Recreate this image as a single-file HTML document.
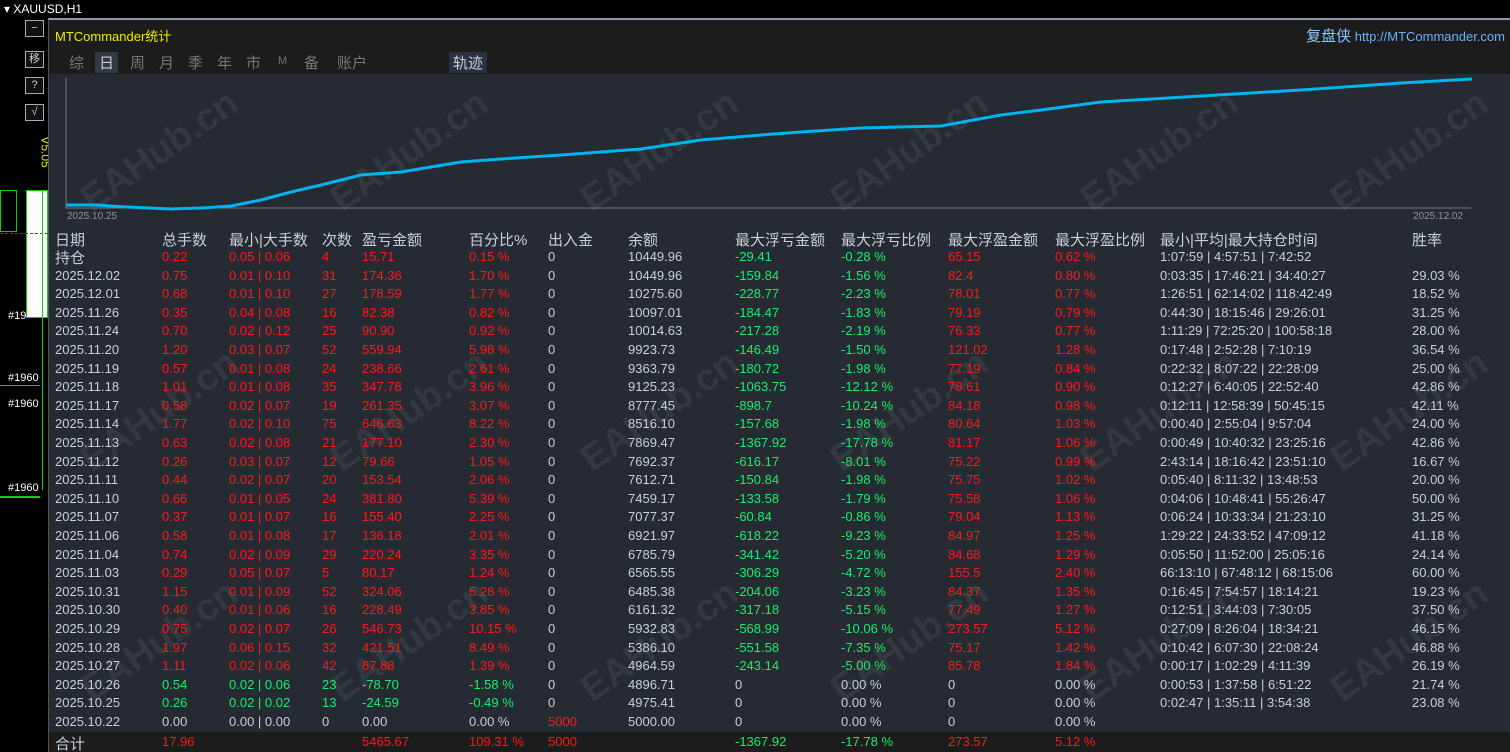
<!DOCTYPE html>
<html><head><meta charset="utf-8"><style>
body{margin:0;width:1510px;height:750px;background:#000;overflow:hidden;position:relative;font-family:"Liberation Sans","Noto Sans CJK SC",sans-serif;font-size:13px;color:#c8d0dc}
.abs{position:absolute}
#panel{left:48px;top:18px;width:1462px;height:732px;background:#252a33;border-top:2px solid #8a98aa;border-left:1px solid #555;overflow:hidden}
#hdr{left:0;top:0;width:1462px;height:54px;background:#1c1c1c}
.tab{position:absolute;top:32px;font-size:15px;color:#777;white-space:nowrap}
.btn{position:absolute;left:25px;width:17px;height:15px;border:1px solid #aab;background:#111;color:#ccc;font-size:11px;text-align:center;line-height:15px}
.r{color:#ff1a1a}.g{color:#1aee6a}.w{color:#c8d0dc}
.row{position:absolute;left:0;width:1460px;height:18px;white-space:nowrap}
.row span{position:absolute;top:0;white-space:nowrap}
.wm{position:absolute;font-size:38px;font-weight:bold;color:rgba(255,255,255,0.07);transform:rotate(-35deg);white-space:nowrap}
</style></head><body>
<div class="abs" style="left:4px;top:2px;color:#fff;font-size:12px">▾ XAUUSD,H1</div>
<div class="btn" style="top:20px">−</div>
<div class="btn" style="top:51px">移</div>
<div class="btn" style="top:77px">?</div>
<div class="btn" style="top:104px">√</div>
<div class="abs" style="left:30px;top:145px;color:#ee0;font-size:12px;transform:rotate(90deg)">V5.05</div>
<div class="abs" style="left:0;top:190px;width:15px;height:40px;border:1px solid #1c1"></div>
<div class="abs" style="left:26px;top:190px;width:20px;height:126px;background:#fff;border:1px solid #1c1"></div>
<div class="abs" style="left:0;top:233px;width:48px;border-top:1px dashed #f00"></div>
<div class="abs" style="left:42px;top:190px;width:1px;height:300px;background:#1c1"></div>
<div class="abs" style="left:8px;top:310px;color:#fff;font-size:11px">#19</div>
<div class="abs" style="left:8px;top:372px;color:#fff;font-size:11px">#1960</div>
<div class="abs" style="left:8px;top:398px;color:#fff;font-size:11px">#1960</div>
<div class="abs" style="left:8px;top:482px;color:#fff;font-size:11px">#1960</div>
<div class="abs" style="left:0;top:385px;width:40px;border-top:1px solid #1c1"></div>
<div class="abs" style="left:0;top:496px;width:40px;border-top:2px solid #1c1"></div>
<div id="panel" class="abs">
<div id="hdr" class="abs">
<div class="abs" style="left:6px;top:6px;color:#ee0;font-size:13px;white-space:nowrap">MTCommander统计</div>
<div class="abs" style="right:6px;top:5px;font-size:13px;white-space:nowrap"><span style="color:#8cc8ff;font-size:15px">复盘侠</span> <span style="color:#6ab0ff">http://MTCommander.com</span></div>
<span class="tab" style="left:20px">综</span>
<span class="tab" style="left:46px;background:#333a44;color:#ccd;padding:0 4px">日</span>
<span class="tab" style="left:81px">周</span>
<span class="tab" style="left:110px">月</span>
<span class="tab" style="left:139px">季</span>
<span class="tab" style="left:168px">年</span>
<span class="tab" style="left:197px">市</span>
<span class="tab" style="left:229px;font-size:11px;top:35px">M</span>
<span class="tab" style="left:255px">备</span>
<span class="tab" style="left:288px">账户</span>
<span class="tab" style="left:400px;background:#2a3240;color:#ccd;padding:0 4px">轨迹</span>
</div>
<div class="wm" style="left:20px;top:110px">EAHub.cn</div>
<div class="wm" style="left:270px;top:110px">EAHub.cn</div>
<div class="wm" style="left:520px;top:110px">EAHub.cn</div>
<div class="wm" style="left:770px;top:110px">EAHub.cn</div>
<div class="wm" style="left:1020px;top:110px">EAHub.cn</div>
<div class="wm" style="left:1270px;top:110px">EAHub.cn</div>
<div class="wm" style="left:20px;top:370px">EAHub.cn</div>
<div class="wm" style="left:270px;top:370px">EAHub.cn</div>
<div class="wm" style="left:520px;top:370px">EAHub.cn</div>
<div class="wm" style="left:770px;top:370px">EAHub.cn</div>
<div class="wm" style="left:1020px;top:370px">EAHub.cn</div>
<div class="wm" style="left:1270px;top:370px">EAHub.cn</div>
<div class="wm" style="left:20px;top:600px">EAHub.cn</div>
<div class="wm" style="left:270px;top:600px">EAHub.cn</div>
<div class="wm" style="left:520px;top:600px">EAHub.cn</div>
<div class="wm" style="left:770px;top:600px">EAHub.cn</div>
<div class="wm" style="left:1020px;top:600px">EAHub.cn</div>
<div class="wm" style="left:1270px;top:600px">EAHub.cn</div>
<svg class="abs" style="left:0;top:0" width="1462" height="200">
<polyline points="17,58 17,188 1422,188" fill="none" stroke="#777" stroke-width="1"/>
<polyline points="17,185 47,185 77,187 122,189 152,188 182,186 212,180 242,172 272,165 312,155 352,152 412,142 452,139 512,135 592,129 652,120 712,115 752,112 812,108 892,106 952,95 992,90 1052,82 1152,76 1252,70 1352,63 1423,59" fill="none" stroke="#00b4f0" stroke-width="3"/>
</svg>
<div class="abs" style="left:18px;top:191px;font-size:10px;color:#8a94a4">2025.10.25</div>
<div class="abs" style="left:1364px;top:191px;font-size:10px;color:#8a94a4">2025.12.02</div>
<div class="abs" style="left:0;top:712px;width:1462px;height:20px;background:#1c1c1c"></div>
<div id="tbl"></div>
</div>
<script>
const X=[6,113,180,273,313,420,499,579,686,792,899,1006,1111,1363];
const H=["日期","总手数","最小|大手数","次数","盈亏金额","百分比%","出入金","余额","最大浮亏金额","最大浮亏比例","最大浮盈金额","最大浮盈比例","最小|平均|最大持仓时间","胜率"];
const D=`持仓,0.22,0.05|0.06,4,15.71,0.15 %,0,10449.96,-29.41,-0.28 %,65.15,0.62 %,1:07:59|4:57:51|7:42:52,
2025.12.02,0.75,0.01|0.10,31,174.36,1.70 %,0,10449.96,-159.84,-1.56 %,82.4,0.80 %,0:03:35|17:46:21|34:40:27,29.03 %
2025.12.01,0.68,0.01|0.10,27,178.59,1.77 %,0,10275.60,-228.77,-2.23 %,78.01,0.77 %,1:26:51|62:14:02|118:42:49,18.52 %
2025.11.26,0.35,0.04|0.08,16,82.38,0.82 %,0,10097.01,-184.47,-1.83 %,79.19,0.79 %,0:44:30|18:15:46|29:26:01,31.25 %
2025.11.24,0.70,0.02|0.12,25,90.90,0.92 %,0,10014.63,-217.28,-2.19 %,76.33,0.77 %,1:11:29|72:25:20|100:58:18,28.00 %
2025.11.20,1.20,0.03|0.07,52,559.94,5.98 %,0,9923.73,-146.49,-1.50 %,121.02,1.28 %,0:17:48|2:52:28|7:10:19,36.54 %
2025.11.19,0.57,0.01|0.08,24,238.66,2.61 %,0,9363.79,-180.72,-1.98 %,77.19,0.84 %,0:22:32|8:07:22|22:28:09,25.00 %
2025.11.18,1.01,0.01|0.08,35,347.78,3.96 %,0,9125.23,-1063.75,-12.12 %,78.61,0.90 %,0:12:27|6:40:05|22:52:40,42.86 %
2025.11.17,0.58,0.02|0.07,19,261.35,3.07 %,0,8777.45,-898.7,-10.24 %,84.18,0.98 %,0:12:11|12:58:39|50:45:15,42.11 %
2025.11.14,1.77,0.02|0.10,75,646.63,8.22 %,0,8516.10,-157.68,-1.98 %,80.64,1.03 %,0:00:40|2:55:04|9:57:04,24.00 %
2025.11.13,0.63,0.02|0.08,21,177.10,2.30 %,0,7869.47,-1367.92,-17.78 %,81.17,1.06 %,0:00:49|10:40:32|23:25:16,42.86 %
2025.11.12,0.26,0.03|0.07,12,79.66,1.05 %,0,7692.37,-616.17,-8.01 %,75.22,0.99 %,2:43:14|18:16:42|23:51:10,16.67 %
2025.11.11,0.44,0.02|0.07,20,153.54,2.06 %,0,7612.71,-150.84,-1.98 %,75.75,1.02 %,0:05:40|8:11:32|13:48:53,20.00 %
2025.11.10,0.66,0.01|0.05,24,381.80,5.39 %,0,7459.17,-133.58,-1.79 %,75.58,1.06 %,0:04:06|10:48:41|55:26:47,50.00 %
2025.11.07,0.37,0.01|0.07,16,155.40,2.25 %,0,7077.37,-60.84,-0.86 %,79.04,1.13 %,0:06:24|10:33:34|21:23:10,31.25 %
2025.11.06,0.58,0.01|0.08,17,136.18,2.01 %,0,6921.97,-618.22,-9.23 %,84.97,1.25 %,1:29:22|24:33:52|47:09:12,41.18 %
2025.11.04,0.74,0.02|0.09,29,220.24,3.35 %,0,6785.79,-341.42,-5.20 %,84.68,1.29 %,0:05:50|11:52:00|25:05:16,24.14 %
2025.11.03,0.29,0.05|0.07,5,80.17,1.24 %,0,6565.55,-306.29,-4.72 %,155.5,2.40 %,66:13:10|67:48:12|68:15:06,60.00 %
2025.10.31,1.15,0.01|0.09,52,324.06,5.28 %,0,6485.38,-204.06,-3.23 %,84.37,1.35 %,0:16:45|7:54:57|18:14:21,19.23 %
2025.10.30,0.40,0.01|0.06,16,228.49,3.85 %,0,6161.32,-317.18,-5.15 %,77.49,1.27 %,0:12:51|3:44:03|7:30:05,37.50 %
2025.10.29,0.75,0.02|0.07,26,546.73,10.15 %,0,5932.83,-568.99,-10.06 %,273.57,5.12 %,0:27:09|8:26:04|18:34:21,46.15 %
2025.10.28,1.97,0.06|0.15,32,421.51,8.49 %,0,5386.10,-551.58,-7.35 %,75.17,1.42 %,0:10:42|6:07:30|22:08:24,46.88 %
2025.10.27,1.11,0.02|0.06,42,67.88,1.39 %,0,4964.59,-243.14,-5.00 %,85.78,1.84 %,0:00:17|1:02:29|4:11:39,26.19 %
2025.10.26,0.54,0.02|0.06,23,-78.70,-1.58 %,0,4896.71,0,0.00 %,0,0.00 %,0:00:53|1:37:58|6:51:22,21.74 %
2025.10.25,0.26,0.02|0.02,13,-24.59,-0.49 %,0,4975.41,0,0.00 %,0,0.00 %,0:02:47|1:35:11|3:54:38,23.08 %
2025.10.22,0.00,0.00|0.00,0,0.00,0.00 %,5000,5000.00,0,0.00 %,0,0.00 %,,`.split("\n");
let h='<div class="row" style="top:209px;font-size:15px">'+H.map((t,i)=>`<span style="left:${X[i]}px">${t}</span>`).join("")+'</div>';
D.forEach((l,k)=>{const c=l.split(",");const top=229+k*18.6;
 let cls=c[4].startsWith("-")?"g":(c[4]=="0.00"?"w":"r");
 const cc=[ "w",cls,cls,cls,cls,cls,c[6]=="0"?"w":"r","w","w","w","w","w","w","w"];
 if(c[8]!="0"){cc[8]="g";cc[9]="g";cc[10]="r";cc[11]="r";} else {cc[9]="w";cc[11]="w";}
 h+=`<div class="row" style="top:${top}px">`+c.map((t,i)=>`<span class="${cc[i]}" style="left:${X[i]}px${k==0&&i==0?';font-size:15px;top:-2px':''}">${t.replace(/\|/g,' | ')}</span>`).join("")+'</div>';});
h+=`<div class="row" style="top:714px"><span style="left:6px;font-size:15px;top:-1px">合计</span><span class="r" style="left:113px">17.96</span><span class="r" style="left:313px">5465.67</span><span class="r" style="left:420px">109.31 %</span><span class="r" style="left:499px">5000</span><span class="g" style="left:686px">-1367.92</span><span class="g" style="left:792px">-17.78 %</span><span class="r" style="left:899px">273.57</span><span class="r" style="left:1006px">5.12 %</span></div>`;
document.getElementById("tbl").innerHTML=h;
</script>
</body></html>
